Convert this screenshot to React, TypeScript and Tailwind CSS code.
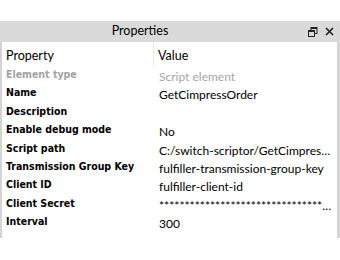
import React from "react";

const rows: { label: string; value: string; dim?: boolean }[] = [
  { label: "Element type", value: "Script element", dim: true },
  { label: "Name", value: "GetCimpressOrder" },
  { label: "Description", value: "" },
  { label: "Enable debug mode", value: "No" },
  { label: "Script path", value: "C:/switch-scriptor/GetCimpressOrder.js" },
  { label: "Transmission Group Key", value: "fulfiller-transmission-group-key" },
  { label: "Client ID", value: "fulfiller-client-id" },
  { label: "Client Secret", value: "****************************************************" },
  { label: "Interval", value: "300" },
];

const seg = { fontFamily: 'Lato, "Noto Sans", sans-serif' };
const tah = { fontFamily: '"DejaVu Sans Condensed", "DejaVu Sans", Verdana, sans-serif', fontStretch: "condensed" as const };

export default function App() {
  return (
    <div className="w-[340px] h-[260px] bg-white overflow-hidden">
      <div className="h-[21px]" />
      <div className="h-[21px] bg-[#dadada] flex items-center relative" style={seg}>
        <div className="flex-1 text-center text-[12.5px] text-black pr-[60px] leading-none">Properties</div>
        <div className="absolute right-[22px] top-[6px]">
          <svg width="10" height="10" viewBox="0 0 10 10">
            <rect x="3" y="0.5" width="6" height="6" fill="none" stroke="#222" strokeWidth="1" />
            <rect x="3" y="0.5" width="6" height="1.5" fill="#222" />
            <rect x="0.5" y="3.5" width="6" height="6" fill="#dadada" stroke="#222" strokeWidth="1" />
            <rect x="0.5" y="3.5" width="6" height="1.5" fill="#222" />
          </svg>
        </div>
        <div className="absolute right-[6px] top-[6px]">
          <svg width="9" height="9" viewBox="0 0 9 9">
            <path d="M1 1 L8 8 M8 1 L1 8" stroke="#222" strokeWidth="1.7" />
          </svg>
        </div>
      </div>
      <div className="h-[196px] border-l-2 border-r-[3px] border-[#d4d4d4] bg-white">
        <div className="grid grid-cols-[152px_1fr] h-[24px] text-[12.5px] text-black" style={seg}>
          <div className="pl-[4px] pt-[5px] h-full border-r border-[#e6e6e6]">Property</div>
          <div className="pl-[4px] pt-[5px]">Value</div>
        </div>
        {rows.map((r) => (
          <div key={r.label} className="grid grid-cols-[152px_1fr] h-[18.4px]">
            <div
              className={`pl-[4px] text-[10.5px] font-bold leading-[16px] whitespace-nowrap ${r.dim ? "text-[#a2a2a2]" : "text-black"}`}
              style={tah}
            >
              {r.label}
            </div>
            <div
              className={`pl-[5px] pr-[2px] pt-[3px] text-[12px] leading-[16px] whitespace-nowrap overflow-hidden text-ellipsis ${r.dim ? "text-[#a6a6a6]" : "text-black"}`}
              style={seg}
            >
              {r.value}
            </div>
          </div>
        ))}
      </div>
    </div>
  );
}
